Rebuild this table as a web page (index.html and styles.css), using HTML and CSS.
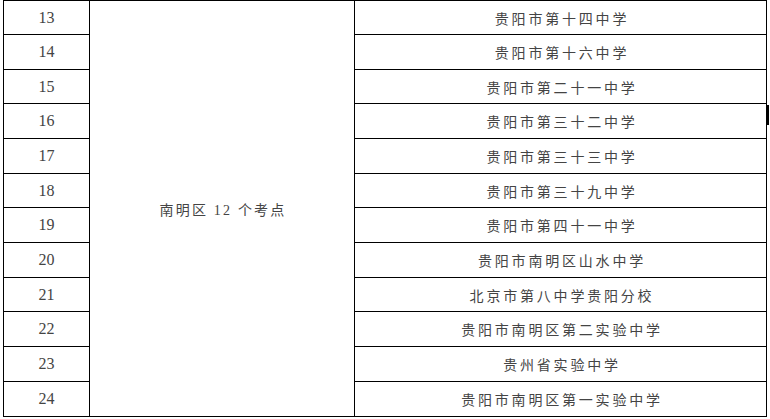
FILE: index.html
```html
<!DOCTYPE html>
<html lang="zh-CN">
<head>
<meta charset="utf-8">
<link rel="stylesheet" href="styles.css">
</head>
<body>
<div class="sheet">
  <div class="num r1">13</div>
  <div class="area">南明区 12 个考点</div>
  <div class="name r1">贵阳市第十四中学</div>
  <div class="num r2">14</div>
  <div class="name r2">贵阳市第十六中学</div>
  <div class="num r3">15</div>
  <div class="name r3">贵阳市第二十一中学</div>
  <div class="num r4">16</div>
  <div class="name r4">贵阳市第三十二中学</div>
  <div class="num r5">17</div>
  <div class="name r5">贵阳市第三十三中学</div>
  <div class="num r6">18</div>
  <div class="name r6">贵阳市第三十九中学</div>
  <div class="num r7">19</div>
  <div class="name r7">贵阳市第四十一中学</div>
  <div class="num r8">20</div>
  <div class="name r8">贵阳市南明区山水中学</div>
  <div class="num r9">21</div>
  <div class="name r9">北京市第八中学贵阳分校</div>
  <div class="num r10">22</div>
  <div class="name r10">贵阳市南明区第二实验中学</div>
  <div class="num r11">23</div>
  <div class="name r11">贵州省实验中学</div>
  <div class="num r12">24</div>
  <div class="name r12">贵阳市南明区第一实验中学</div>
</div>
<div class="caret"></div>
</body>
</html>
```

FILE: styles.css
```css
html, body {
  margin: 0;
  padding: 0;
  background: #ffffff;
}
body {
  position: relative;
  width: 770px;
  height: 419px;
  overflow: hidden;
  font-family: "Liberation Serif", "Noto Sans CJK SC", serif;
  font-size: 14px;
  color: #444444;
}
.sheet {
  display: grid;
  grid-template-columns: 86px 265px 412px;
  grid-template-rows: 34px 35px 34px 35px 35px 34px 35px 35px 34px 35px 35px 35px;
  margin-left: 3px;
  width: 763px;
  border-top: 1px solid #000;
  border-left: 1px solid #000;
}
.sheet > div {
  display: flex;
  align-items: center;
  justify-content: center;
  border-right: 1px solid #000;
  border-bottom: 1px solid #000;
  box-sizing: border-box;
  white-space: nowrap;
}
.num {
  grid-column: 1;
  font-size: 16px;
}
.area {
  grid-column: 2;
  grid-row: 1 / 13;
  letter-spacing: 2.2px;
  padding-left: 2px;
}
.name {
  grid-column: 3;
  letter-spacing: 2.8px;
  padding-left: 3px;
}
.r1 { grid-row: 1; }
.r2 { grid-row: 2; }
.r3 { grid-row: 3; }
.r4 { grid-row: 4; }
.r5 { grid-row: 5; }
.r6 { grid-row: 6; }
.r7 { grid-row: 7; }
.r8 { grid-row: 8; }
.r9 { grid-row: 9; }
.r10 { grid-row: 10; }
.r11 { grid-row: 11; }
.r12 { grid-row: 12; }
.caret {
  position: absolute;
  left: 767px;
  top: 105px;
  width: 2px;
  height: 20px;
  background: #000;
}
```
